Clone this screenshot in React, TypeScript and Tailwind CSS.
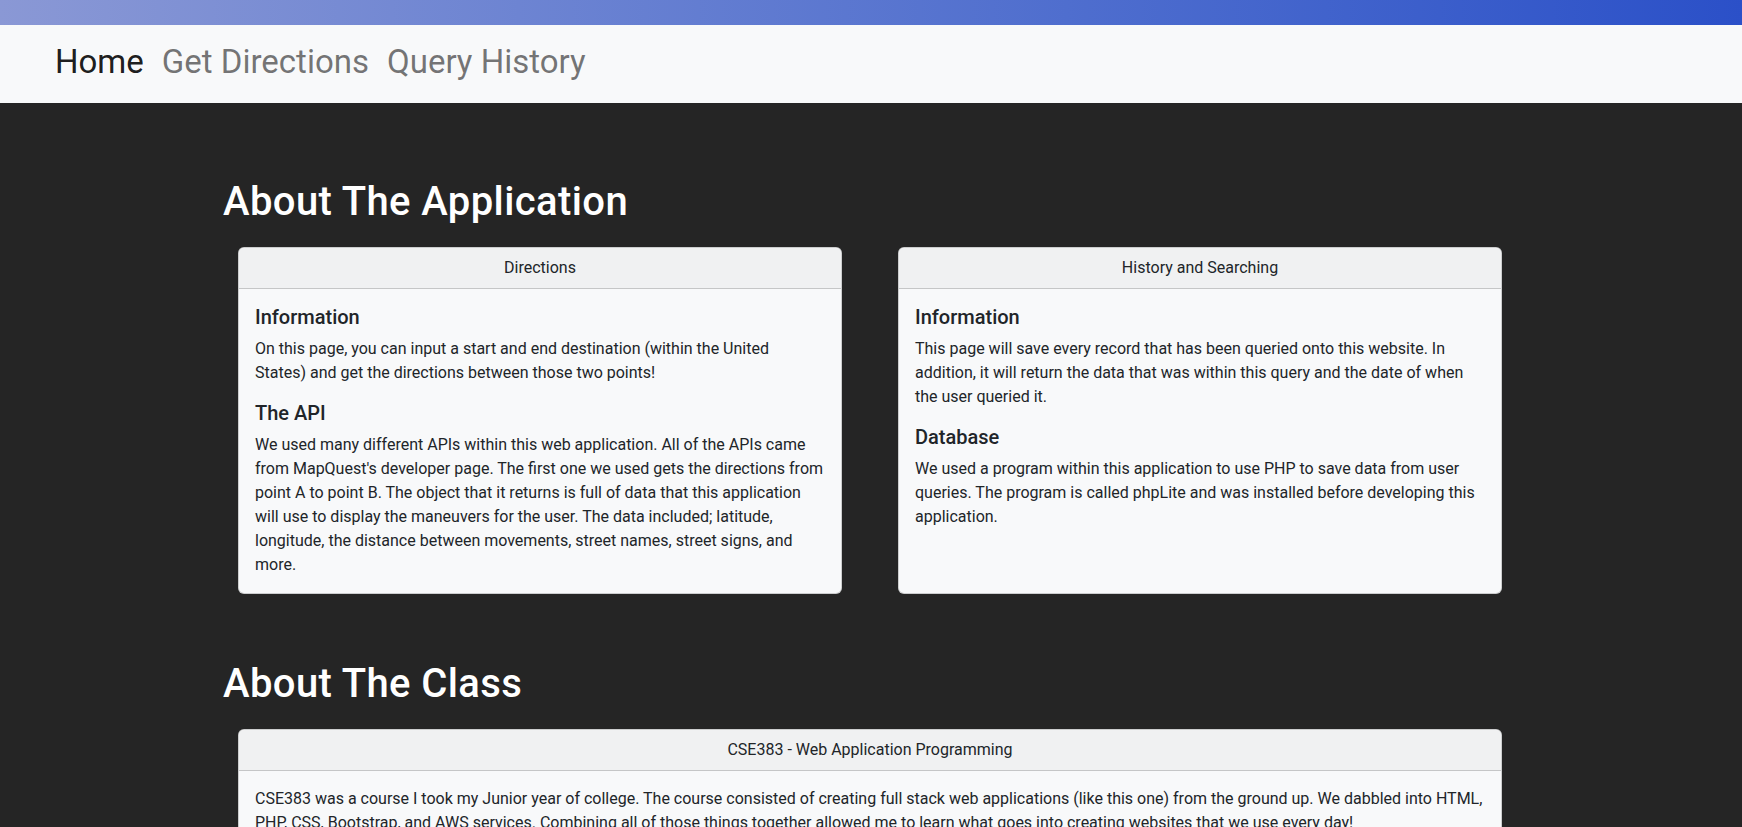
import React from "react";

const font = { fontFamily: "Roboto, 'Liberation Sans', sans-serif" };

function Card({ title, children }: { title: string; children: React.ReactNode }) {
  return (
    <div className="flex flex-col rounded-md border border-black/[.175] bg-[#f8f9fa] text-[#212529] overflow-hidden">
      <div className="py-2 px-4 text-center text-base leading-6 bg-[#f0f1f2] border-b border-black/[.175]">
        {title}
      </div>
      <div className="p-4 flex-1">{children}</div>
    </div>
  );
}

function Section({ title, children }: { title: string; children: React.ReactNode }) {
  return (
    <section>
      <h1 className="text-[40px] leading-[48px] font-medium text-white tracking-[0.01em]">{title}</h1>
      <div className="mt-[21px] pl-[15px] pr-[17px]">{children}</div>
    </section>
  );
}

export default function App() {
  return (
    <div className="min-h-screen bg-[#252525]" style={font}>
      {/* top gradient strip */}
      <div className="h-[25px] bg-gradient-to-r from-[#8a98d5] to-[#2b50c8]" />

      {/* navbar */}
      <nav className="h-[78px] bg-[#f8f9fa] flex items-center pl-[55px] gap-[18px] text-[33px] pb-1">
        <a className="text-black/90 cursor-pointer">Home</a>
        <a className="text-black/55 cursor-pointer hover:text-black/70">Get Directions</a>
        <a className="text-black/55 cursor-pointer hover:text-black/70">Query History</a>
      </nav>

      <main className="w-[1320px] mx-auto px-3 pt-[75px] pb-16 flex flex-col gap-[66px]">
        <Section title="About The Application">
          <div className="grid grid-cols-2 gap-[56px]">
            <Card title="Directions">
              <h5 className="text-xl leading-6 font-medium mb-2">Information</h5>
              <p className="text-base leading-6 mb-4">
                On this page, you can input a start and end destination (within the United
                <br />
                States) and get the directions between those two points!
              </p>
              <h5 className="text-xl leading-6 font-medium mb-2">The API</h5>
              <p className="text-base leading-6">
                We used many different APIs within this web application. All of the APIs came from MapQuest's
                developer page. The first one we used gets the directions from point A to point B. The object that it
                returns is full of data that this application will use to display the maneuvers for the user. The
                data included; latitude, longitude, the distance between movements, street names, street signs, and
                more.
              </p>
            </Card>
            <Card title="History and Searching">
              <h5 className="text-xl leading-6 font-medium mb-2">Information</h5>
              <p className="text-base leading-6 mb-4">
                This page will save every record that has been queried onto this website. In addition, it will return
                the data that was within this query and the date of when the user queried it.
              </p>
              <h5 className="text-xl leading-6 font-medium mb-2">Database</h5>
              <p className="text-base leading-6">
                We used a program within this application to use PHP to save data from user queries. The program is
                called phpLite and was installed before developing this application.
              </p>
            </Card>
          </div>
        </Section>

        <Section title="About The Class">
          <Card title="CSE383 - Web Application Programming">
            <p className="text-base leading-6">
              CSE383 was a course I took my Junior year of college. The course consisted of creating full stack web
              applications (like this one) from the ground up. We dabbled into HTML, PHP, CSS, Bootstrap, and AWS
              services. Combining all of those things together allowed me to learn what goes into creating websites
              that we use every day!
            </p>
          </Card>
        </Section>
      </main>
    </div>
  );
}
